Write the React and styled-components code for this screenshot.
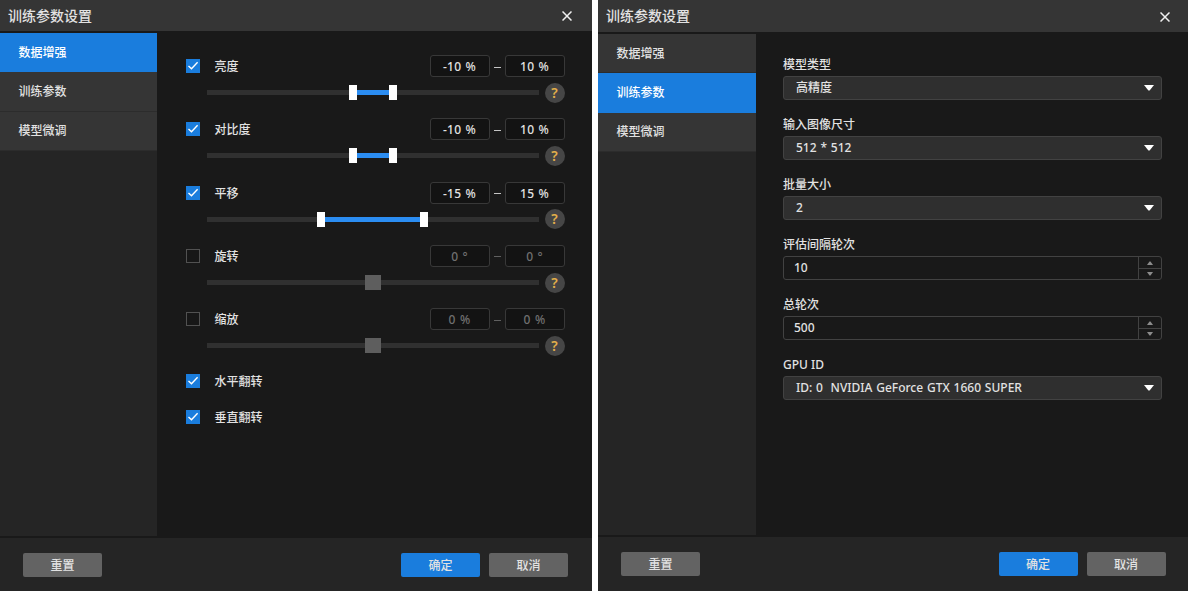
import React from 'react';
import styled, { createGlobalStyle, css } from 'styled-components';

const GlobalStyle = createGlobalStyle`
  * {
    box-sizing: border-box;
  }

  body {
    margin: 0;
    background: #ffffff;
    overflow: hidden;
  }

  button, input {
    font: inherit;
    color: inherit;
  }
`;

const Page = styled.div`
  display: grid;
  grid-template-columns: 592px 590px;
  column-gap: 6px;
  width: 1188px;
  height: 591px;
  font-family: 'Noto Sans', 'Noto Sans CJK SC', sans-serif;
  font-size: 12px;
  font-weight: 500;
  line-height: 16px;
  color: #e2e2e2;
`;

const Dialog = styled.section`
  display: grid;
  grid-template-rows: ${({ $header, $footer }) => `${$header}px 1fr ${$footer}px`};
  height: 591px;
  background: #191919;
`;

const Header = styled.header`
  display: flex;
  align-items: center;
  justify-content: space-between;
  padding: 1px ${({ $right }) => $right}px 0 8px;
  background: #353535;
  font-size: 14px;
  line-height: 20px;
`;

const Title = styled.h1`
  margin: -1px 0 0;
  font-size: inherit;
  font-weight: inherit;
`;

const CloseButton = styled.button`
  display: flex;
  padding: 0;
  border: 0;
  background: none;
`;

const Body = styled.div`
  display: grid;
  grid-template-columns: ${({ $sidebar }) => $sidebar}px 1fr;
  padding: 2px 0;
`;

const Sidebar = styled.nav`
  display: flex;
  flex-direction: column;
  background: #252525;
`;

const Tab = styled.button`
  height: 39.4px;
  padding: 1px 18.5px 0;
  border: 0;
  border-bottom: 1px solid #2c2c2c;
  background: #353535;
  text-align: left;

  ${({ $active }) => $active && css`
    border-color: #1a7ddd;
    background: #1a7ddd;
    color: #ffffff;
  `}
`;

const Augment = styled.div`
  display: flex;
  flex-direction: column;
  padding: 22px 27.5px 0 28.5px;
`;

const Group = styled.div`
  height: 63.3px;
`;

const GroupHead = styled.div`
  display: flex;
  align-items: center;
  height: 22px;
`;

const Name = styled.span`
  flex: 1;
  margin: 2px 0 0 15px;
`;

const Check = styled.span`
  display: flex;
  align-items: center;
  justify-content: center;
  width: 14px;
  height: 14px;
  border: 1px solid ${({ $on }) => ($on ? '#1a7ddd' : '#515151')};
  background: ${({ $on }) => ($on ? '#1a7ddd' : '#171717')};
`;

const ValueBox = styled.span`
  width: 60px;
  height: 22px;
  border: 1px solid #383838;
  border-radius: 3px;
  background: #131313;
  text-align: center;
  line-height: 22px;
  letter-spacing: 0.2px;
  word-spacing: 1px;
  color: ${({ $muted }) => ($muted ? '#707070' : '#e2e2e2')};
`;

const Dash = styled.span`
  width: 7px;
  height: 1px;
  margin: 2px 4px 0;
  background: ${({ $muted }) => ($muted ? '#606060' : '#c4c4c4')};
`;

const SliderLine = styled.div`
  display: flex;
  align-items: center;
  gap: 6px;
  height: 20px;
  margin-top: 5.7px;
  padding-left: 21px;
`;

const Track = styled.div`
  position: relative;
  width: 332px;
  height: 5px;
  background: #303030;
`;

const Range = styled.span`
  position: absolute;
  top: 0;
  height: 5px;
  background: #2b8df2;
`;

const Thumb = styled.span`
  position: absolute;
  top: -5px;
  width: ${({ $muted }) => ($muted ? 16 : 8)}px;
  height: 15px;
  background: ${({ $muted }) => ($muted ? '#5e5e5e' : '#ffffff')};
`;

const Help = styled.span`
  width: 20px;
  height: 20px;
  border-radius: 50%;
  background: #464646;
  color: #e3b04b;
  font-size: 14px;
  font-weight: 600;
  line-height: 20px;
  text-align: center;
`;

const Flips = styled.div`
  margin-top: -8px;
`;

const FlipRow = styled.div`
  display: flex;
  align-items: center;
  height: 35.5px;
`;

const Form = styled.div`
  padding: 22px 27px 0 27px;
`;

const Field = styled.div`
  height: 60px;
`;

const Label = styled.div`
  height: 20px;
  line-height: 18px;
`;

const Control = styled.div`
  display: flex;
  align-items: center;
  justify-content: space-between;
  width: 378.5px;
  height: 24px;
  border: 1px solid #424242;
  border-radius: 3px;
  white-space: pre;
`;

const SelectBox = styled(Control)`
  padding: 0 7px 0 12px;
  background: #2f2f2f;
  word-spacing: 0.7px;
`;

const SpinBox = styled(Control)`
  padding-left: 10px;
  line-height: 18px;
`;

const Steps = styled.span`
  display: grid;
  grid-template-rows: 1fr 1fr;
  width: 23px;
  height: 22px;
  border-left: 1px solid #424242;
`;

const Step = styled.span`
  display: flex;
  align-items: center;
  justify-content: center;

  & + & {
    border-top: 1px solid #424242;
  }
`;

const Footer = styled.footer`
  display: flex;
  gap: 9px;
  padding: ${({ $top, $side }) => `${$top}px ${$side}px 0 23px`};
  background: #252525;
`;

const Button = styled.button`
  width: 79px;
  height: 24px;
  padding: 1px 0 0;
  border: 0;
  border-radius: 2px;
  background: ${({ $primary }) => ($primary ? '#1a7ddd' : '#636363')};

  &:first-child {
    margin-right: auto;
  }
`;

const TABS = ['数据增强', '训练参数', '模型微调'];

const RANGES = [
  { name: '亮度', min: '-10 %', max: '10 %', from: 146, to: 186, on: true },
  { name: '对比度', min: '-10 %', max: '10 %', from: 146, to: 186, on: true },
  { name: '平移', min: '-15 %', max: '15 %', from: 114.5, to: 217.5, on: true },
  { name: '旋转', min: '0 °', max: '0 °', from: 166, to: 166 },
  { name: '缩放', min: '0 %', max: '0 %', from: 166, to: 166 },
];

const FIELDS = [
  { label: '模型类型', value: '高精度' },
  { label: '输入图像尺寸', value: '512 * 512' },
  { label: '批量大小', value: '2' },
  { label: '评估间隔轮次', value: '10', spin: true },
  { label: '总轮次', value: '500', spin: true },
  { label: 'GPU ID', value: 'ID: 0  NVIDIA GeForce GTX 1660 SUPER' },
];

function Checkbox({ on }) {
  return (
    <Check $on={on}>
      {on && (
        <svg width="12" height="12" viewBox="0 0 12 12" fill="none">
          <path d="M1.5 5.9 4.5 8.8 10.6 2.2" stroke="#fff" strokeWidth="1.4" />
        </svg>
      )}
    </Check>
  );
}

function RangeGroup({ name, min, max, from, to, on }) {
  return (
    <Group>
      <GroupHead>
        <Checkbox on={on} />
        <Name>{name}</Name>
        <ValueBox $muted={!on}>{min}</ValueBox>
        <Dash $muted={!on} />
        <ValueBox $muted={!on}>{max}</ValueBox>
      </GroupHead>
      <SliderLine>
        <Track>
          {on && <Range style={{ left: from, width: to - from }} />}
          {on && <Thumb style={{ left: from - 4 }} />}
          {on && <Thumb style={{ left: to - 4 }} />}
          {!on && <Thumb $muted style={{ left: from - 8 }} />}
        </Track>
        <Help>?</Help>
      </SliderLine>
    </Group>
  );
}

function FormField({ label, value, spin }) {
  return (
    <Field>
      <Label>{label}</Label>
      {spin ? (
        <SpinBox>
          {value}
          <Steps>
            <Step>
              <svg width="6" height="4" viewBox="0 0 6 4"><path d="M0 4 2.5 0.5h1L6 4z" fill="#8b8b8b" /></svg>
            </Step>
            <Step>
              <svg width="6" height="4" viewBox="0 0 6 4"><path d="M0 0 2.5 3.5h1L6 0z" fill="#8b8b8b" /></svg>
            </Step>
          </Steps>
        </SpinBox>
      ) : (
        <SelectBox>
          {value}
          <svg width="10" height="6" viewBox="0 0 10 6"><path d="M0 0h10L5.6 5.5H4.4z" fill="#fff" /></svg>
        </SelectBox>
      )}
    </Field>
  );
}

function SettingsDialog({ active, header, footer, sidebar, closeRight, footerTop, footerSide, children }) {
  return (
    <Dialog $header={header} $footer={footer}>
      <Header $right={closeRight}>
        <Title>训练参数设置</Title>
        <CloseButton aria-label="关闭">
          <svg width="10" height="10" viewBox="0 0 10 10">
            <path d="M0.5 0.5 9.5 9.5M9.5 0.5 0.5 9.5" stroke="#f0f0f0" strokeWidth="1.5" />
          </svg>
        </CloseButton>
      </Header>
      <Body $sidebar={sidebar}>
        <Sidebar>
          {TABS.map((tab, i) => (
            <Tab key={tab} $active={i === active}>{tab}</Tab>
          ))}
        </Sidebar>
        {children}
      </Body>
      <Footer $top={footerTop} $side={footerSide}>
        <Button>重置</Button>
        <Button $primary>确定</Button>
        <Button>取消</Button>
      </Footer>
    </Dialog>
  );
}

export default function App() {
  return (
    <>
      <GlobalStyle />
      <Page>
        <SettingsDialog active={0} header={31} footer={53} sidebar={157} closeRight={20} footerTop={15} footerSide={24}>
          <Augment>
            {RANGES.map((range) => (
              <RangeGroup key={range.name} {...range} />
            ))}
            <Flips>
              {['水平翻转', '垂直翻转'].map((name) => (
                <FlipRow key={name}>
                  <Checkbox on />
                  <Name>{name}</Name>
                </FlipRow>
              ))}
            </Flips>
          </Augment>
        </SettingsDialog>
        <SettingsDialog active={1} header={32} footer={54} sidebar={158} closeRight={19} footerTop={15} footerSide={23}>
          <Form>
            {FIELDS.map((field) => (
              <FormField key={field.label} {...field} />
            ))}
          </Form>
        </SettingsDialog>
      </Page>
    </>
  );
}
